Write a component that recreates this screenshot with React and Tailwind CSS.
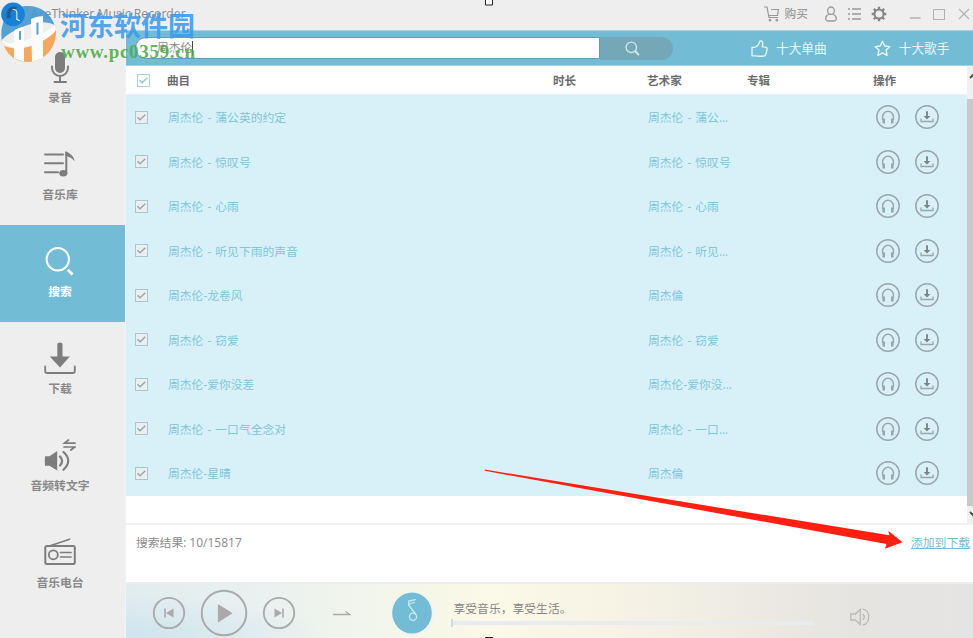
import clsx from 'clsx'

const tracks = [
  { title: '周杰伦 - 蒲公英的约定', artist: '周杰伦 - 蒲公...' },
  { title: '周杰伦 - 惊叹号', artist: '周杰伦 - 惊叹号' },
  { title: '周杰伦 - 心雨', artist: '周杰伦 - 心雨' },
  { title: '周杰伦 - 听见下雨的声音', artist: '周杰伦 - 听见...' },
  { title: '周杰伦-龙卷风', artist: '周杰倫' },
  { title: '周杰伦 - 窃爱', artist: '周杰伦 - 窃爱' },
  { title: '周杰伦-爱你没差', artist: '周杰伦-爱你没...' },
  { title: '周杰伦 - 一口气全念对', artist: '周杰伦 - 一口...' },
  { title: '周杰伦-星晴', artist: '周杰倫' },
]

const MicIcon = () => (
  <>
    <rect x="11" y="1" width="10" height="21" rx="5" fill="currentColor" stroke="none" />
    <path d="M8 15.5v1.500a8 8 0 0 0 16 0v-1.500M16 25v6M10.500 31h11.500" />
  </>
)

const LibraryIcon = () => (
  <>
    <path d="M1 6.400h18M1 15.300h18M1 24.300h13" />
    <ellipse cx="19.300" cy="25.300" rx="4" ry="3.200" fill="currentColor" stroke="none" />
    <path d="M22.300 25V4.500" strokeWidth="2" />
    <path d="M21.500 3.500c3 .8 8.500 4 9.200 9.700-2.600-3-5-4.300-9.200-5.500z" fill="currentColor" stroke="none" />
  </>
)

const SearchNavIcon = () => (
  <>
    <circle cx="13.800" cy="14.300" r="11.200" strokeWidth="2" />
    <path d="M23.800 24.800l4.700 4.600" strokeWidth="2.800" strokeLinecap="butt" />
  </>
)

const DownloadNavIcon = () => (
  <>
    <path d="M13.300 2q0-1.500 2.600-1.500T18.500 2v12.500h7.300L16 25.500 5.800 14.500h7.500z" fill="currentColor" stroke="none" />
    <path d="M1.200 24.500v4.500q0 2 2 2h25.600q2 0 2-2v-4.500" strokeWidth="1.800" />
  </>
)

const SpeechIcon = () => (
  <>
    <path d="M1 17.200h4.500L13.200 12v19.500L5.500 26.800H1q-.5-4.800 0-9.600z" fill="currentColor" stroke="none" />
    <path d="M16 17.500q4.200 4.500 0 9M19.500 13q9.500 8.800 0 17.800" strokeWidth="2.200" />
    <path d="M31 4.200H20.500l4-3.200M20 8h10.800l-4 3" strokeWidth="1.700" />
  </>
)

const RadioIcon = () => (
  <>
    <rect x="1.300" y="10" width="29.500" height="18" rx="1.500" />
    <path d="M7 9.500l18.500-6.300M16.500 16.500H27M16.500 21H27" strokeWidth="1.700" />
    <circle cx="9.300" cy="18.800" r="4.500" strokeWidth="1.800" />
  </>
)

const navItems = [
  { label: '录音', icon: MicIcon },
  { label: '音乐库', icon: LibraryIcon },
  { label: '搜索', icon: SearchNavIcon, active: true },
  { label: '下载', icon: DownloadNavIcon },
  { label: '音频转文字', icon: SpeechIcon },
  { label: '音乐电台', icon: RadioIcon },
]

const Checkbox = ({ className, tick = 'text-[#8ba9b4]' }) => (
  <span className={clsx('flex size-[13px] items-center justify-center border', className)}>
    <svg viewBox="0 0 11 11" className={clsx('size-[11px]', tick)} fill="none" stroke="currentColor" strokeWidth="1.400">
      <path d="M1.500 5.300l2.500 2.500L9.300 2.800" />
    </svg>
  </span>
)

const HeadphonesButton = () => (
  <button type="button" className="text-[#99a6ab]">
    <svg viewBox="0 0 24 24" className="block size-6" fill="none" stroke="currentColor">
      <circle cx="12" cy="12" r="11.200" strokeWidth="1.500" />
      <path d="M6.600 15v-3a5.400 5.800 0 0 1 10.800 0v3" strokeWidth="1.400" />
      <path d="M7.700 13.500v5M16.300 13.500v5" strokeWidth="2.600" />
    </svg>
  </button>
)

const DownloadButton = () => (
  <button type="button" className="text-[#99a6ab]">
    <svg viewBox="0 0 24 24" className="block size-6" fill="none" stroke="currentColor">
      <circle cx="12" cy="12" r="11.200" strokeWidth="1.500" />
      <path d="M6 13.500v3h12v-3" strokeWidth="1.300" />
      <path d="M12 6.300v6" stroke="#7b8487" strokeWidth="1.900" />
      <path d="M8.600 11h6.800L12 14.600z" fill="#7b8487" stroke="none" />
    </svg>
  </button>
)

const TitleBar = () => (
  <header className="flex h-[30px] shrink-0 items-center bg-[#eee] pb-[2px] text-[#999]">
    {/* Logo */}
    <svg viewBox="0 0 26 26" className="relative z-20 ml-px mt-px size-[25px]" fill="none">
      <circle cx="12.500" cy="12.800" r="12.300" fill="#1781d8" />
      <path d="M8 17v-6a5 5 0 0 1 7.500-3.500" stroke="#235a8c" strokeWidth="4" />
      <path d="M12 8q4-1 4.500 3v7l3 1.500" stroke="#d9ecf8" strokeWidth="1.200" />
    </svg>
    <span className="ml-[5px] text-[12.200px] text-[#8b8b8b]">AceThinker Music Recorder</span>

    <div className="ml-auto flex h-full items-center">
      <svg viewBox="0 0 16 16" className="size-4" fill="none" stroke="currentColor" strokeWidth="1.200">
        <path d="M0 1h3l2 10.500h9M5 9.500h8.500l.9-6H7" />
        <circle cx="6" cy="14.200" r=".8" />
        <circle cx="12.800" cy="14.200" r=".8" />
      </svg>
      <span className="ml-[5px] text-[11.700px] text-[#8d8d8d]">购买</span>
      <svg viewBox="0 0 12 16" className="ml-[17px] h-4 w-3" fill="none" stroke="currentColor" strokeWidth="1.300">
        <ellipse cx="6" cy="4.700" rx="3.400" ry="3.700" />
        <path d="M4 8C0 10-.3 15 3 15h6c3.300 0 3-5-1-7" />
      </svg>
      <svg viewBox="0 0 14 14" className="ml-[11px] size-[14px]" fill="none" stroke="currentColor" strokeWidth="1.300">
        <path d="M0 2h2M4 2h9M0 7h2M4 7h9M0 12h2M4 12h9" />
      </svg>
      <svg viewBox="0 0 16 16" className="ml-[9px] size-4 text-[#858585]" fill="none" stroke="currentColor">
        <circle cx="8" cy="8" r="4.500" strokeWidth="2" />
        <path
          d="M8 .7v2.600M8 12.700v2.600M.7 8h2.600M12.700 8h2.600M2.800 2.800l1.900 1.900M11.300 11.300l1.900 1.900M13.200 2.800l-1.900 1.900M4.700 11.300l-1.900 1.900"
          strokeWidth="2.300"
        />
      </svg>
      <svg viewBox="0 0 62 14" className="ml-[22px] mr-[2px] h-[14px] w-[62px] text-[#b2b2b2]" fill="none" stroke="currentColor">
        <path d="M1 11h10.500" strokeWidth="1.500" />
        <rect x="24.500" y="2.500" width="11" height="10" />
        <path d="M50 2l10 10M60 2L50 12" strokeWidth="1.200" />
      </svg>
    </div>
  </header>
)

const Sidebar = () => (
  <nav className="w-[126px] shrink-0 border-r border-[#f3f3f3] bg-[#eee] pt-px">
    {navItems.map(({ label, icon: Icon, active }) => (
      <div
        key={label}
        className={clsx(
          'flex h-[97px] flex-col items-center pr-[5px] pt-[20px]',
          active ? 'bg-[#72bdd5] text-white' : 'text-[#7d7d7d]',
        )}
      >
        <svg viewBox="0 0 32 32" className="size-8 shrink-0" fill="none" stroke="currentColor" strokeWidth="2" strokeLinecap="round">
          <Icon />
        </svg>
        <span className={clsx('mt-[5px] text-[11.800px] font-bold leading-[18px]', active ? 'text-white' : 'text-[#8a8a8a]')}>
          {label}
        </span>
      </div>
    ))}
  </nav>
)

const SearchBar = () => (
  <div className="flex h-9 shrink-0 items-center border-y border-[#a5d6e5] bg-[#72bdd5] text-[#e9f6fa]">
    <div className="ml-[9px] flex h-[22px] w-[465px] items-center rounded-l-full border border-[#5f9fb8] bg-white pl-[21px]">
      <span className="text-[11.700px] text-[#888]">周杰伦</span>
      <span className="h-[15px] w-px bg-[#444]" />
    </div>
    <button type="button" className="flex h-[23px] w-[73px] items-center rounded-r-full bg-[#74a8b7] pl-[25px]">
      <svg viewBox="0 0 15 15" className="size-[15px] text-[#d5e6ec]" fill="none" stroke="currentColor" strokeWidth="1.400">
        <circle cx="6.300" cy="6.300" r="5.200" />
        <path d="M10 10l4 4" strokeWidth="1.800" />
      </svg>
    </button>
    <svg viewBox="0 0 17 17" className="ml-[78px] size-[17px]" fill="none" stroke="currentColor" strokeWidth="1.300" strokeLinejoin="round">
      <path d="M4.300 7.300H1v8.500h3.300M4.300 15.800c3 .6 6.500.5 9 .2 1.500-.3 3-6.500 2.700-8-.3-1-1.500-1.200-4.700-1.200.7-2.800.7-5.500-1-6C8.500.5 8.500 2 8 3.500c-.7 2-2.200 3-3.700 3.800" />
    </svg>
    <span className="ml-[8px] text-[12.700px] leading-none">十大单曲</span>
    <svg viewBox="0 0 17 17" className="ml-[47px] size-[17px]" fill="none" stroke="currentColor" strokeWidth="1.400" strokeLinejoin="round">
      <path d="M8.500 1.300l2.200 4.700 5.200.6-3.800 3.500 1 5.200-4.600-2.500-4.600 2.500 1-5.200L1.100 6.600 6.300 6z" />
    </svg>
    <span className="ml-[8px] text-[12.700px] leading-none">十大歌手</span>
  </div>
)

const TrackTable = () => (
  <div className="flex h-[457px] shrink-0">
    <div className="w-[841px]">
      <div className="grid h-7 grid-cols-[41px_386px_94px_100px_126px_1fr] items-center bg-white pt-px text-[11.600px] font-bold text-[#6c6c6c]">
        <Checkbox className="ml-[11px] border-[#a9d4e0] bg-white" tick="text-[#95c4d3]" />
        <span>曲目</span>
        <span>时长</span>
        <span>艺术家</span>
        <span>专辑</span>
        <span>操作</span>
      </div>
      <div className="border-t border-[#e6f2f5] bg-[#d8f1f9]">
        {tracks.map((track, i) => (
          <div
            key={i}
            className="grid h-[44.500px] grid-cols-[42px_480px_228px_39px_1fr] items-center text-[11.800px] text-[#81c5da]"
          >
            <Checkbox className="ml-[9px] border-[#a6c6d1] bg-[#eee]" />
            <span className="pt-[1.500px] [word-spacing:1px]">{track.title}</span>
            <span className="pt-[1.500px] [word-spacing:1px]">{track.artist}</span>
            <HeadphonesButton />
            <DownloadButton />
          </div>
        ))}
      </div>
    </div>
    {/* Scrollbar */}
    <div className="flex w-[6px] flex-col items-end overflow-hidden bg-[#f0f0f0]">
      <svg viewBox="0 0 6 33" className="h-[33px] w-[6px]" fill="none" stroke="#505050" strokeWidth="2">
        <path d="M3 12l4-4" />
      </svg>
      <div className="h-[407px] w-full bg-[#c9c9c9]" />
      <svg viewBox="0 0 6 17" className="h-[17px] w-[6px]" fill="none" stroke="#505050" strokeWidth="2">
        <path d="M3 6l4 4" />
      </svg>
    </div>
  </div>
)

const StatusBar = () => (
  <div className="flex h-[59px] shrink-0 items-start justify-between border-t-2 border-[#f3f3f3] bg-white pl-[10px] pr-[3px] pt-[8px] text-[11.800px] leading-[18px]">
    <span className="text-[#8a8a8a]">
      搜索结果: <span className="text-[12px]">10/15817</span>
    </span>
    <a href="#download" className="text-[#72bdd5] underline">添加到下载</a>
  </div>
)

const Player = () => (
  <footer className="flex flex-1 items-start border-t-2 border-[#ededed] bg-[radial-gradient(ellipse_200px_40px_at_0%_90%,#cfe5ef_0%,transparent_100%),linear-gradient(90deg,#e0ecee_0%,#eaf1f0_16%,#f4f6ea_32%,#fbf9e7_43%,#f6f3e5_58%,#eeebe3_72%,#e6e4e1_86%,#e5e4e4_100%)] text-[#aaa]">
    <div className="flex h-[57px] items-center pl-[25.500px]">
      <svg viewBox="0 0 34 34" className="size-[34px]" fill="none" stroke="currentColor">
        <circle cx="17" cy="17" r="15.200" strokeWidth="1.800" />
        <path d="M13 12.500v9" strokeWidth="1.600" />
        <path d="M21.500 12.500v9L14 17z" fill="currentColor" stroke="none" />
      </svg>
      <svg viewBox="0 0 48 48" className="ml-[14px] size-12" fill="none" stroke="currentColor">
        <circle cx="24" cy="24" r="22.300" strokeWidth="1.900" />
        <path d="M18.500 16l13 8.300-13 8.300z" fill="currentColor" strokeWidth="1.200" strokeLinejoin="round" />
      </svg>
      <svg viewBox="0 0 34 34" className="ml-[14px] size-[34px]" fill="none" stroke="currentColor">
        <circle cx="17" cy="17" r="15.200" strokeWidth="1.800" />
        <path d="M21 12.500v9" strokeWidth="1.600" />
        <path d="M12.500 12.500v9L20 17z" fill="currentColor" stroke="none" />
      </svg>
      <svg viewBox="0 0 18 8" className="ml-[37px] h-2 w-[18px]" fill="none" stroke="currentColor" strokeWidth="1.300">
        <path d="M0 5.500h17L12.500 2.500" />
      </svg>
      <svg viewBox="0 0 46 46" className="ml-[38px] size-[46px]" fill="none">
        <circle cx="23" cy="23" r="22" fill="#f1f5f1" />
        <ellipse cx="23" cy="23" rx="19.800" ry="20.500" fill="#72bdd5" />
        <g stroke="#c9e8f1" strokeWidth="1.300">
          <circle cx="24" cy="26.700" r="3.600" />
          <path d="M27 24.500L19.500 15l.3-4 7-1.500M19.800 14.500l6-2.500" />
        </g>
      </svg>
    </div>
    <div className="ml-[19px] w-[359px] pt-[15px]">
      <p className="text-[11.800px] leading-[18px] text-[#858585]">享受音乐，享受生活。</p>
      <div className="-ml-[3px] mt-[2px] flex h-[8px] items-center">
        <span className="h-[8px] w-[2px] bg-[#ccdbe8]" />
        <span className="h-[4px] flex-1 bg-[#e9ecef]" />
      </div>
    </div>
    <svg viewBox="0 0 20 18" className="ml-[37px] mt-[24px] h-[18px] w-5 text-[#b9b9b5]" fill="none" stroke="currentColor" strokeWidth="1.300">
      <path d="M.8 6h4.500l5-4.500v15l-5-4.500H.8zM12.800 6q3 3 0 6M12.800 1.200c8 1 8 14.600 0 15.600" />
    </svg>
  </footer>
)

const Watermark = () => (
  <div className="pointer-events-none absolute left-0 top-0 z-10">
    <svg viewBox="0 0 60 66" className="absolute left-0 top-0 h-[66px] w-[60px]" fill="none" opacity=".9">
      <path d="M1.500 37C0 18 12 6 28 6c13 0 23 8 26.500 19C46 20 32 22 20 28 12 32 4 36 1.500 41z" fill="#4699d2" />
      <path d="M4 46c10 4 24 3 35-3 8-4 14-9 17-13 1 18-12 32-28 32C17 62 8 56 4 46z" fill="#f6a14d" />
      {/* Two towers crossed by the orbit */}
      <path d="M14 31q5-4 10-4v35l-10-4z" fill="#fff" />
      <path d="M31 19q6-3 12-3v42l-11 4z" fill="#fff" />
      <path d="M19 31.500l2-.8v9h-2zM36.500 23l2-.8V34l-2 1z" fill="#4699d2" />
      <path d="M1.500 38c3 9 20 5 33-1 10-4 18-9 20-12q2 4 0 7C48 39 37 44 25 46.500 13 48.500 2 46 1.500 38z" fill="#fff" />
    </svg>
    <div className="absolute left-[60px] top-[9px] whitespace-nowrap font-['Noto_Sans_CJK_SC',sans-serif] text-[27px] font-bold leading-[32px] text-[#3d9aec]/90">
      河东软件园
    </div>
    <div className="absolute left-[61px] top-[42px] whitespace-nowrap font-['Liberation_Serif',serif] text-[19px] font-bold leading-[20px] tracking-[0.700px] text-[#4faa45]/90">
      www.pc0359.cn
    </div>
  </div>
)

// Red pointer towards the "add to download" link, with the selection handles around it
const Annotation = () => (
  <svg viewBox="0 0 973 638" className="pointer-events-none absolute inset-0 z-10 h-[638px] w-[973px]">
    <path d="M484.800 469.600L889.400 535.300 888.300 530.700 902.500 542.300 885 548.700 886.400 544 484.800 470.800z" fill="#ff2012" />
    <path d="M485.500-1v6h7v-6" fill="#fff" stroke="#222" />
    <path d="M485 637.500h8" stroke="#222" />
  </svg>
)

export default function App() {
  return (
    <div className="relative flex h-[638px] w-[973px] flex-col overflow-hidden bg-white font-['Open_Sans','Noto_Sans_CJK_SC',sans-serif]">
      <TitleBar />
      <div className="flex min-h-0 flex-1">
        <Sidebar />
        <main className="flex w-[847px] flex-col">
          <SearchBar />
          <TrackTable />
          <StatusBar />
          <Player />
        </main>
      </div>
      <Watermark />
      <Annotation />
    </div>
  )
}
